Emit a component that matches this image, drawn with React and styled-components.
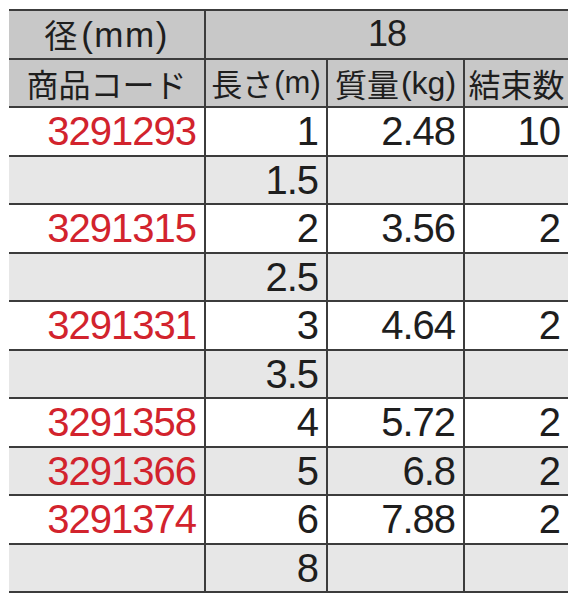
import React from "react";
import styled, { createGlobalStyle } from "styled-components";

const GlobalStyle = createGlobalStyle`
  html, body {
    margin: 0;
    padding: 0;
    background: #ffffff;
  }
  body {
    font-family: "Liberation Sans", "Noto Sans CJK JP", Arial, sans-serif;
    color: #1e1e1e;
  }
`;

const Page = styled.div`
  padding: 9px 8px 0 9px;
`;

const Grid = styled.div`
  display: grid;
  grid-template-columns: 195px 122px 137px 105px;
  grid-auto-rows: 48.5px;
  width: 559px;
  border-bottom: 2px solid #3c3c3c;
`;

const Cell = styled.div`
  box-sizing: border-box;
  display: flex;
  align-items: center;
  justify-content: ${(p) => (p.$head ? "center" : "flex-end")};
  padding: ${(p) => (p.$head ? "0" : "0 8px 0 0")};
  border-top: 2px solid #3c3c3c;
  border-left: ${(p) => (p.$first ? "none" : "2px solid #3c3c3c")};
  grid-column: ${(p) => p.$span || "auto"};
  background: ${(p) => (p.$head ? "#c8c8c8" : p.$alt ? "#e7e7e7" : "#ffffff")};
  font-size: ${(p) => p.$size || "40px"};
  letter-spacing: ${(p) => p.$tight || "-1px"};
  color: ${(p) => (p.$code ? "#d2232d" : "#1e1e1e")};
  white-space: nowrap;
  line-height: 1;
`;

const Jp = styled.span`
  font-family: "Noto Sans CJK JP", sans-serif;
  font-weight: 400;
  font-size: ${(p) => p.$size || "32px"};
  letter-spacing: 0;
`;

const Unit = styled.span`
  margin-left: ${(p) => p.$gap || "0"};
  font-size: ${(p) => p.$size || "32px"};
  letter-spacing: ${(p) => p.$tight || "0"};
`;

const rows = [
  ["3291293", "1", "2.48", "10"],
  ["", "1.5", "", ""],
  ["3291315", "2", "3.56", "2"],
  ["", "2.5", "", ""],
  ["3291331", "3", "4.64", "2"],
  ["", "3.5", "", ""],
  ["3291358", "4", "5.72", "2"],
  ["3291366", "5", "6.8", "2"],
  ["3291374", "6", "7.88", "2"],
  ["", "8", "", ""],
];

export default function App() {
  return (
    <>
      <GlobalStyle />
      <Page>
        <Grid>
          <Cell $head $first>
            <Jp $size="33px">径</Jp>
            <Unit $gap="4px" $size="35px" $tight="1.5px">(mm)</Unit>
          </Cell>
          <Cell $head $span="2 / span 3" $size="36px">18</Cell>

          <Cell $head $first>
            <Jp>商品コード</Jp>
          </Cell>
          <Cell $head>
            <Jp $size="31px">長さ</Jp>
            <Unit $gap="1px" $size="31px" $tight="0">(m)</Unit>
          </Cell>
          <Cell $head>
            <Jp>質量</Jp>
            <Unit $gap="2px" $size="32px">(kg)</Unit>
          </Cell>
          <Cell $head>
            <Jp>結束数</Jp>
          </Cell>

          {rows.map((row, i) =>
            row.map((value, j) => (
              <Cell
                key={i + "-" + j}
                $first={j === 0}
                $alt={i % 2 === 1}
                $code={j === 0}
              >
                {value}
              </Cell>
            ))
          )}
        </Grid>
      </Page>
    </>
  );
}
